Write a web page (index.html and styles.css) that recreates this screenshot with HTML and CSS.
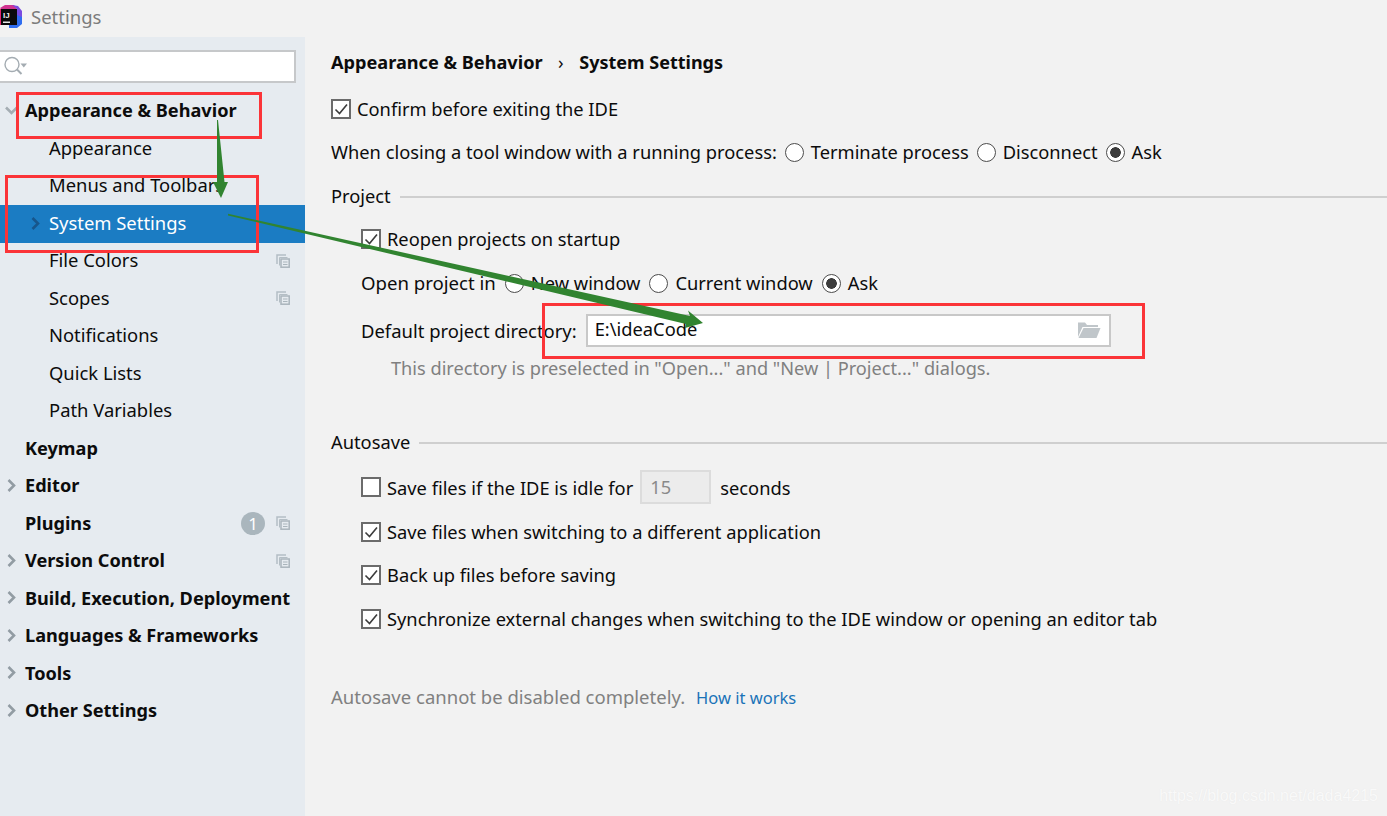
FILE: index.html
```html
<!DOCTYPE html>
<html lang="en">
<head>
<meta charset="utf-8">
<title>Settings</title>
<link rel="stylesheet" href="styles.css">
</head>
<body>
<svg width="0" height="0" class="defs">
  <defs>
    <g id="copy">
      <path d="M1 10V1H10" fill="none" stroke="#b4bec5" stroke-width="1.5"/>
      <path d="M3.500 11.500V3.500H11.500" fill="none" stroke="#b4bec5" stroke-width="1"/>
      <rect x="5" y="5" width="8.200" height="8.200" fill="none" stroke="#aab5bc" stroke-width="1.500"/>
      <path d="M7 8H11.500M7 10.500H11.500" stroke="#aab5bc" stroke-width="1.200"/>
    </g>
    <path id="chev" d="M1.500 1L7 6.500L1.500 12" fill="none" stroke="#929ca3" stroke-width="2.600"/>
    <path id="tick" d="M3.500 9.500L7.500 13.500L15 4.500" fill="none" stroke="#3c3c3c" stroke-width="1.600"/>
  </defs>
</svg>

<div class="window">
  <header class="titlebar">
    <svg class="logo" width="22" height="24" viewBox="0 0 22 24">
      <path d="M0 3L5 0H14L17 4H1Z" fill="#d0338f"/>
      <path d="M12 0L18 1L22 6V14L17 14V4Z" fill="#7a4be0"/>
      <path d="M17 10L22 12V19L17 23H9V19H17Z" fill="#2f6df0"/>
      <path d="M0 4H2V20H0Z" fill="#e8246f"/>
      <rect x="1" y="4" width="16" height="16" fill="#0a0a0a"/>
      <text x="3" y="12.500" class="logo-text">IJ</text>
      <rect x="3" y="16.500" width="7" height="1.500" fill="#e8e8e8"/>
    </svg>
    <span class="title">Settings</span>
  </header>

  <div class="content">
    <aside class="sidebar">
      <div class="search">
        <svg width="24" height="24" viewBox="0 0 24 24">
          <circle cx="9" cy="9.500" r="7" fill="none" stroke="#a4acb2" stroke-width="1.400"/>
          <path d="M14 14.500L18.500 19" stroke="#a4acb2" stroke-width="2"/>
          <path d="M17.500 8.500H24L20.800 12.500Z" fill="#a4acb2"/>
        </svg>
      </div>
      <nav class="tree">
        <div class="item top">
          <svg class="arrow" width="13" height="14" viewBox="0 0 13 14"><path d="M1 3.500L6.500 9L12 3.500" fill="none" stroke="#a4adb3" stroke-width="2.600"/></svg>
          <span>Appearance &amp; Behavior</span>
        </div>
        <div class="item sub"><span>Appearance</span></div>
        <div class="item sub"><span>Menus and Toolbars</span></div>
        <div class="item sub selected">
          <svg class="arrow-sel" width="9" height="14" viewBox="0 0 9 14"><path d="M1.500 1L7 6.500L1.500 12" fill="none" stroke="#17568c" stroke-width="2.600"/></svg>
          <span>System Settings</span>
        </div>
        <div class="item sub"><span>File Colors</span><svg class="copy" width="14" height="14"><use href="#copy"/></svg></div>
        <div class="item sub"><span>Scopes</span><svg class="copy" width="14" height="14"><use href="#copy"/></svg></div>
        <div class="item sub"><span>Notifications</span></div>
        <div class="item sub"><span>Quick Lists</span></div>
        <div class="item sub"><span>Path Variables</span></div>
        <div class="item top"><span>Keymap</span></div>
        <div class="item top"><svg class="arrow right" width="9" height="14" viewBox="0 0 9 14"><use href="#chev"/></svg><span>Editor</span></div>
        <div class="item top"><span>Plugins</span><b class="badge">1</b><svg class="copy" width="14" height="14"><use href="#copy"/></svg></div>
        <div class="item top"><svg class="arrow right" width="9" height="14" viewBox="0 0 9 14"><use href="#chev"/></svg><span>Version Control</span><svg class="copy" width="14" height="14"><use href="#copy"/></svg></div>
        <div class="item top"><svg class="arrow right" width="9" height="14" viewBox="0 0 9 14"><use href="#chev"/></svg><span>Build, Execution, Deployment</span></div>
        <div class="item top"><svg class="arrow right" width="9" height="14" viewBox="0 0 9 14"><use href="#chev"/></svg><span>Languages &amp; Frameworks</span></div>
        <div class="item top"><svg class="arrow right" width="9" height="14" viewBox="0 0 9 14"><use href="#chev"/></svg><span>Tools</span></div>
        <div class="item top"><svg class="arrow right" width="9" height="14" viewBox="0 0 9 14"><use href="#chev"/></svg><span>Other Settings</span></div>
      </nav>
    </aside>

    <main class="panel">
      <div class="row crumbs"><span>Appearance &amp; Behavior</span><span class="crumb-sep">›</span><span>System Settings</span></div>

      <div class="row confirm"><i class="check"><svg width="19" height="19"><use href="#tick"/></svg></i><span>Confirm before exiting the IDE</span></div>

      <div class="row closing">
        <span>When closing a tool window with a running process:</span>
        <i class="radio"></i><span>Terminate process</span>
        <i class="radio"></i><span>Disconnect</span>
        <i class="radio on"></i><span>Ask</span>
      </div>

      <div class="row heading project-h"><span>Project</span><hr></div>

      <div class="row indent reopen"><i class="check"><svg width="19" height="19"><use href="#tick"/></svg></i><span>Reopen projects on startup</span></div>

      <div class="row indent openin">
        <span class="lead">Open project in</span>
        <i class="radio"></i><span>New window</span>
        <i class="radio"></i><span>Current window</span>
        <i class="radio on"></i><span>Ask</span>
      </div>

      <div class="row indent directory">
        <span>Default project directory:</span>
        <div class="field">
          <span>E:\ideaCode</span>
          <svg width="24" height="18" viewBox="0 0 24 18">
            <path d="M1 16V1.500H8L10 4H21V6H5.500L1 16Z" fill="#c0c6ca"/>
            <path d="M6.500 7H23.500L19.500 17H1.500Z" fill="#c0c6ca"/>
          </svg>
        </div>
      </div>

      <div class="row hint">This directory is preselected in "Open..." and "New | Project..." dialogs.</div>

      <div class="row heading autosave-h"><span>Autosave</span><hr></div>

      <div class="row indent idle">
        <i class="check"></i><span>Save files if the IDE is idle for</span>
        <span class="number">15</span><span class="seconds">seconds</span>
      </div>
      <div class="row indent switching"><i class="check"><svg width="19" height="19"><use href="#tick"/></svg></i><span>Save files when switching to a different application</span></div>
      <div class="row indent backup"><i class="check"><svg width="19" height="19"><use href="#tick"/></svg></i><span>Back up files before saving</span></div>
      <div class="row indent sync"><i class="check"><svg width="19" height="19"><use href="#tick"/></svg></i><span>Synchronize external changes when switching to the IDE window or opening an editor tab</span></div>

      <div class="row note"><span>Autosave cannot be disabled completely.</span><a href="#">How it works</a></div>
    </main>
  </div>

  <svg class="annotations" width="1387" height="816" viewBox="0 0 1387 816">
    <g fill="none" stroke="#fb3438" stroke-width="3">
      <rect x="17.500" y="93.500" width="243" height="44"/>
      <rect x="6.500" y="176.500" width="251" height="75"/>
      <rect x="543.500" y="304.500" width="600" height="53"/>
    </g>
    <g fill="#318430">
      <path d="M217 120L218 120L224.500 182L228 182L221 198L213 182L217 182Z"/>
      <path d="M228 213.800L690 316L688 310.500L703 323L685 328L686 324L228 215.400Z"/>
    </g>
  </svg>
  <div class="watermark">https://blog.csdn.net/dada4215</div>
</div>
</body>
</html>
```

FILE: styles.css
```css
* { box-sizing: border-box; }
html, body { margin: 0; height: 100%; }
body { font-family: "Noto Sans", "Open Sans", sans-serif; font-size: 18.300px; color: #0c0c0c; background: #f2f2f2; overflow: hidden; }
.defs { position: absolute; }
.window { position: relative; width: 1387px; height: 816px; display: flex; flex-direction: column; overflow: hidden; }

.titlebar { height: 37px; display: flex; align-items: center; gap: 9px; flex: none; }
.logo { flex: none; margin-top: -3px; }
.logo-text { font: bold 8px "Liberation Sans", sans-serif; fill: #f2f2f2; }
.title { color: #7c7c7c; font-size: 18.500px; margin-top: -5px; }

.content { flex: 1; display: flex; min-height: 0; }

.sidebar { width: 305px; flex: none; background: #e6ebf0; padding-top: 13px; }
.search { width: 297px; height: 33px; margin-left: -1px; background: #fff; border: 2px solid #c6c8ca; border-left: 0; padding: 3px 0 0 4px; }
.search svg { display: block; }
.tree { margin-top: 8.750px; font-size: 18.400px; }
.item { height: 37.500px; display: flex; align-items: center; position: relative; padding-right: 15px; white-space: nowrap; }
.item.top { padding-left: 25px; font-weight: 700; font-size: 18.150px; }
.item.sub { padding-left: 49px; }
.item > span { position: relative; top: -0.500px; }
.item.sub > span { top: -0.750px; }
.item.selected > span { top: -1.250px; }
.arrow { position: absolute; left: 5px; top: 12px; }
.arrow.right { left: 7px; }
.arrow-sel { position: absolute; left: 31px; top: 12px; }
.selected { background: #1b7cc3; background-clip: padding-box; border-top: 1px solid transparent; box-shadow: 0 1px 0 #1b7cc3; color: #fff; }
.copy { margin-left: auto; flex: none; }
.badge { margin-left: auto; width: 24px; height: 23px; border-radius: 50%; background: #aab6bd; color: #fff; font-weight: 400; font-size: 17px; display: flex; align-items: center; justify-content: center; }
.badge + .copy { margin-left: 11px; }

.panel { flex: 1; min-width: 0; padding: 10px 0 0 26px; }
.row { height: 30px; display: flex; align-items: center; white-space: nowrap; }
.row > span { position: relative; top: -1px; }
.indent { padding-left: 30px; }

.crumbs { font-weight: 700; font-size: 18.150px; }
.crumbs > span { top: 0; }
.crumbs > span:last-child { font-size: 18px; }
.crumb-sep { font-weight: 400; margin: 0 15.500px; }
.confirm { margin-top: 17px; }
.closing { margin-top: 13px; }
.closing .radio { margin-left: 8px; }
.project-h { margin-top: 14px; }
.reopen { margin-top: 13px; }
.openin { margin-top: 14px; }
.lead { font-size: 18.600px; }
.directory { margin-top: 17px; }
.row.directory > span { top: 0; font-size: 18.450px; }
.hint { margin-top: 8px; padding-left: 60px; color: #808080; font-size: 18.200px; }
.autosave-h { margin-top: 44px; }
.idle { margin-top: 15px; }
.row.idle > span { top: 0; }
.switching { margin-top: 15px; }
.backup { margin-top: 13px; }
.sync { margin-top: 14px; }
.note { margin-top: 48px; color: #808080; font-size: 18.500px; }

.heading hr { flex: 1; margin: 2px 0 0 9px; border: 0; height: 2px; background: #cfcfcf; }

.check { width: 20px; height: 20px; flex: none; background: #fff; border: 2px solid #6b6b6b; margin-right: 6px; display: block; }
.check svg { display: block; margin: -1px 0 0 -1px; }
.radio { width: 19px; height: 19px; flex: none; border-radius: 50%; background: #fff; border: 1.500px solid #4c4c4c; margin: 0 7px 0 9px; display: block; }
.radio.on { background: radial-gradient(circle, #3c3c3c 0 5px, #fff 5.600px); }

.field { width: 525px; height: 33px; margin-left: 9px; background: #fff; border: 2px solid #c8c8c8; display: flex; align-items: center; justify-content: space-between; padding: 0 8px 0 7px; }
.field > span { position: relative; top: -2px; }
.number { width: 71px; height: 34px; margin-left: 7px; background: #ececec; border: 2px solid #dcdcdc; color: #8a8a8a; padding-left: 8px; line-height: 30px; }
.seconds { margin-left: 9px; }
.note a { color: #1a73b8; text-decoration: none; font-size: 16.500px; margin-left: 11px; }

.annotations { position: absolute; left: 0; top: 0; pointer-events: none; }
.watermark { position: absolute; right: 9px; top: 787px; font: 16px "Liberation Sans", sans-serif; color: #f9f9f9; text-shadow: 0 0 1px #e6e6e6; }
```
